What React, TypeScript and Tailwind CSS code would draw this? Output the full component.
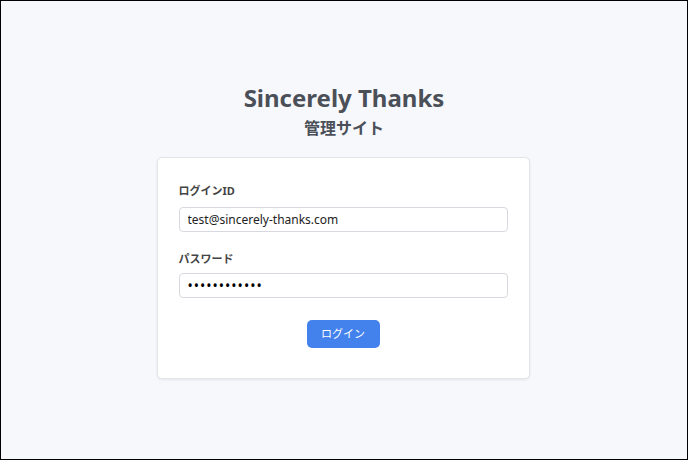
export default function App() {
  return (
    <div
      className="h-[460px] w-[688px] border border-black bg-[#f7f8fc] flex flex-col items-center pt-[81px] text-[#4b5058]"
      style={{ fontFamily: '"Noto Sans", "Noto Sans CJK JP", sans-serif' }}
    >
      <h1 className="text-[24px] leading-[32px] font-bold">Sincerely Thanks</h1>
      <h2 className="text-[16px] leading-[24px] font-bold mt-[2px]">管理サイト</h2>

      <div className="mt-[17px] w-[373px] -translate-x-px bg-white border border-[#e3e5ea] rounded-[5px] shadow-[0_1px_3px_rgba(0,0,0,0.08)] px-[21px] pt-[25px] pb-[30px]">
        <form className="flex flex-col">
          <label className="text-[11px] leading-[16px] font-bold text-[#444]">ログインID</label>
          <input
            type="text"
            defaultValue="test@sincerely-thanks.com"
            className="mt-[8px] h-[25px] w-full border border-[#d7d9de] rounded-[4px] px-[8px] text-[12px] text-[#222] outline-none"
          />
          <label className="mt-[19px] text-[11px] leading-[16px] font-bold text-[#444]">パスワード</label>
          <input
            type="password"
            defaultValue="password1234"
            className="mt-[6px] h-[25px] w-full border border-[#d7d9de] rounded-[4px] px-[8px] text-[14px] tracking-[1px] text-black outline-none"
          />
          <div className="mt-[22px] flex justify-center">
            <button
              type="button"
              className="w-[73px] h-[28px] bg-[#4382ec] text-white text-[11px] rounded-[5px]"
            >
              ログイン
            </button>
          </div>
        </form>
      </div>
    </div>
  );
}
